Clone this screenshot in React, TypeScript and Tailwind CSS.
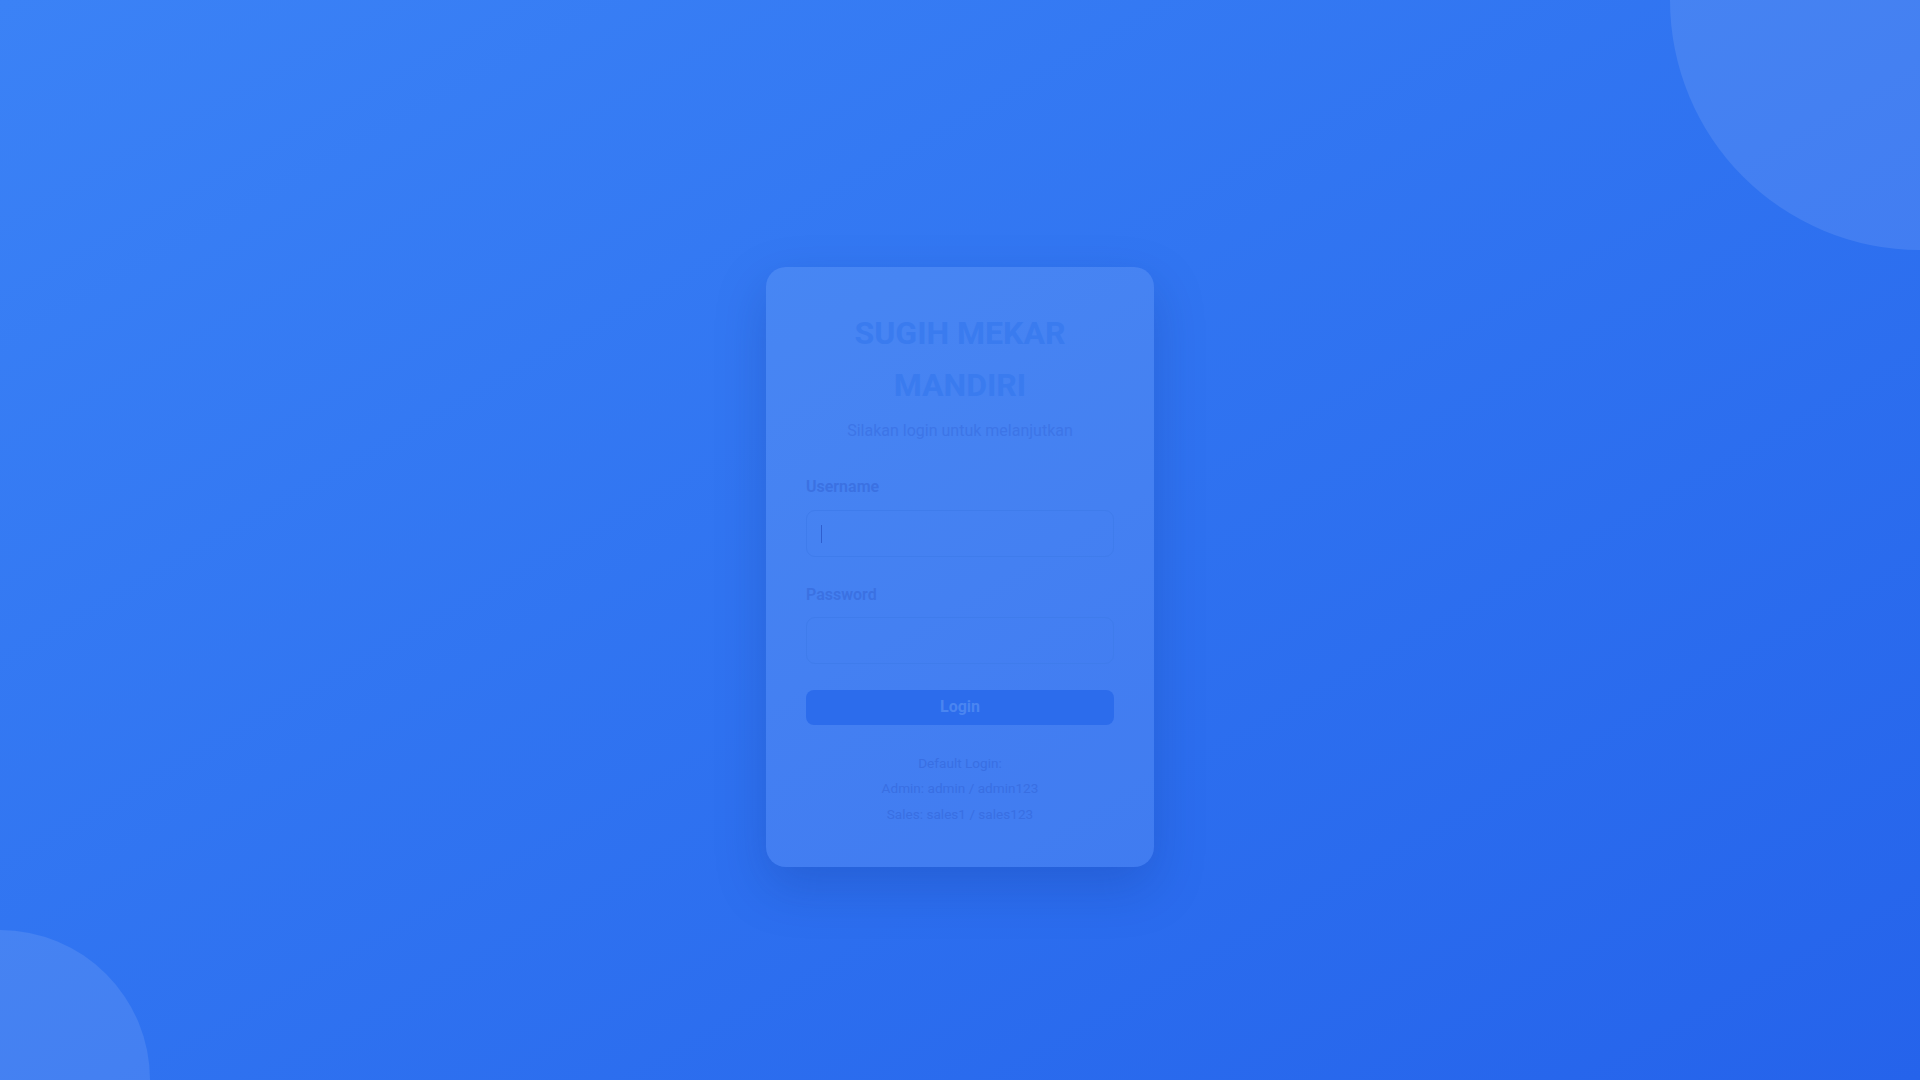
import { useState } from "react";

/** Login screen — card over a blue gradient with two soft circles. */
export default function App() {
  const [username, setUsername] = useState("");
  const [password, setPassword] = useState("");

  return (
    <div
      className="relative flex min-h-screen items-center justify-center overflow-hidden bg-gradient-to-br from-[#3b82f6] to-[#2563eb]"
      style={{ fontFamily: "Roboto, 'Noto Sans', sans-serif" }}
    >
      <div className="pointer-events-none absolute -right-[250px] -top-[250px] h-[500px] w-[500px] rounded-full bg-white/10" />
      <div className="pointer-events-none absolute -bottom-[150px] -left-[150px] h-[300px] w-[300px] rounded-full bg-white/10" />

      <div className="relative mt-[54px] w-[388px] rounded-[20px] bg-white/10 p-10 shadow-[0_20px_50px_rgba(20,50,140,0.25)]">
        <h1 className="text-center text-[32px] font-bold leading-[52px] text-[#3a7bef]">
          SUGIH MEKAR MANDIRI
        </h1>
        <p className="mt-2 text-center text-base leading-6 text-[#3d75e7]">
          Silakan login untuk melanjutkan
        </p>

        <form className="mt-8" onSubmit={(e) => e.preventDefault()}>
          <div className="mb-[26px]">
            <label className="mb-[11px] block text-base font-semibold leading-6 text-[#3b71e2]">
              Username
            </label>
            <div className="relative">
              <input
                autoFocus
                value={username}
                onChange={(e) => setUsername(e.target.value)}
                className="h-[47px] w-full rounded-[9px] border border-[#3f7cec] bg-transparent px-[15px] text-base text-[#2f62d6] caret-transparent outline-none"
              />
              {username === "" && (
                <span className="pointer-events-none absolute left-[15px] top-[15px] h-[18px] w-px bg-[#2f5fd0]" />
              )}
            </div>
          </div>
          <div className="mb-[26px]">
            <label className="mb-[10px] block text-base font-semibold leading-6 text-[#3b71e2]">
              Password
            </label>
            <input
              type="password"
              value={password}
              onChange={(e) => setPassword(e.target.value)}
              className="h-[47px] w-full rounded-[9px] border border-[#3f7cec] bg-transparent px-[15px] text-base text-[#2f62d6] outline-none"
            />
          </div>
          <button
            type="submit"
            className="h-[35px] w-full rounded-lg bg-[#2c6cec] text-base font-bold text-[#4a85f1]"
          >
            Login
          </button>
        </form>

        <div className="mt-[26px] text-center text-[13.6px] leading-[25.5px] text-[#396fe3]">
          <p>Default Login:</p>
          <p>Admin: admin / admin123</p>
          <p>Sales: sales1 / sales123</p>
        </div>
      </div>
    </div>
  );
}
